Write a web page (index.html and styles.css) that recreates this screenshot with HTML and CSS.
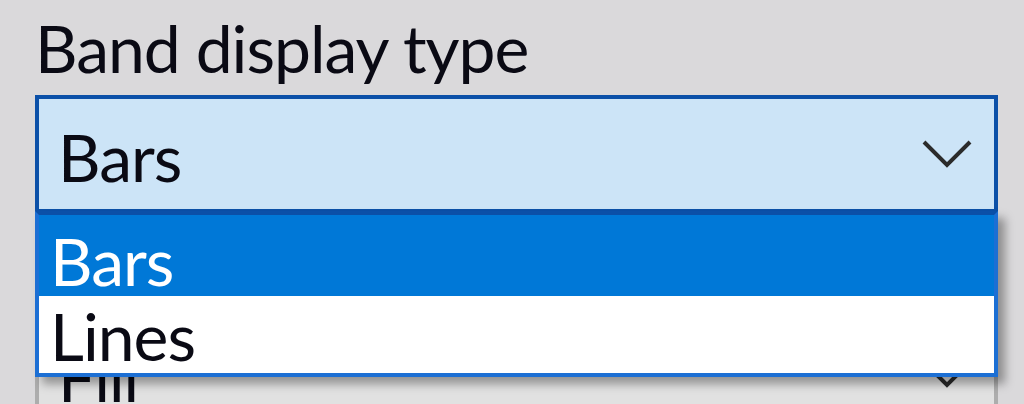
FILE: index.html
```html
<!DOCTYPE html>
<html lang="en">
<head>
    <meta charset="UTF-8">
    <title>Band display type</title>
    <link rel="stylesheet" href="styles.css">
</head>
<body>
    <div class="form">
        <div class="field">
            <div class="field-label">Band display type</div>
            <div class="combo-wrap">
                <div class="combo combo-open">
                    <span class="combo-value">Bars</span>
                    <svg class="chevron" viewBox="0 0 50 28" width="50" height="28">
                        <path d="M2 2 L25 25 L48 2" fill="none" stroke="#2b2b2b" stroke-width="4"/>
                    </svg>
                </div>
                <ul class="dropdown">
                    <li class="selected">Bars</li>
                    <li>Lines</li>
                </ul>
            </div>
        </div>

        <div class="field field-next">
            <div class="combo">
                <span class="combo-value">Fill</span>
                <svg class="chevron" viewBox="0 0 50 28" width="50" height="28">
                    <path d="M2 2 L25 25 L48 2" fill="none" stroke="#2b2b2b" stroke-width="4"/>
                </svg>
            </div>
        </div>
    </div>
</body>
</html>
```

FILE: styles.css
```css
* {
    margin: 0;
    padding: 0;
    box-sizing: border-box;
}

html, body {
    height: 100%;
    overflow: hidden;
}

body {
    background-color: #dad9db;
    color: #0a0a14;
    font-family: 'Lato', 'Noto Sans', sans-serif;
    font-size: 66px;
    letter-spacing: -1px;
}

/* Form column */
.form {
    padding: 15px 0 0 35px;
    width: 998px;
}

.field-label {
    line-height: 66px;
    margin-bottom: 14px;
}

.combo-wrap {
    position: relative;
}

/* Combo box */
.combo {
    display: flex;
    align-items: center;
    height: 118px;
    padding: 6px 22px 0 19px;
    border: 4px solid #adadad;
    background-color: #e1e1e1;
}

.combo-open {
    border-color: #0b50a8;
    background-color: #cce4f7;
}

.combo-value {
    line-height: 66px;
}

.chevron {
    margin-left: auto;
    margin-top: -6px;
}

.field-next {
    margin-top: 102px;
}

/* Open list */
.dropdown {
    position: absolute;
    top: 116px;
    left: 0;
    right: 0;
    z-index: 10;
    list-style: none;
    background-color: #fff;
    border: 4px solid #1c6fd4;
    border-top-color: #0b50a8;
    box-shadow: 7px 7px 9px rgba(0, 0, 0, 0.35);
}

.dropdown li {
    height: 77px;
    padding: 4px 0 0 11px;
    line-height: 71px;
}

.dropdown .selected {
    height: 81px;
    padding-top: 10px;
    background-color: #0078d7;
    color: #fff;
}
```
